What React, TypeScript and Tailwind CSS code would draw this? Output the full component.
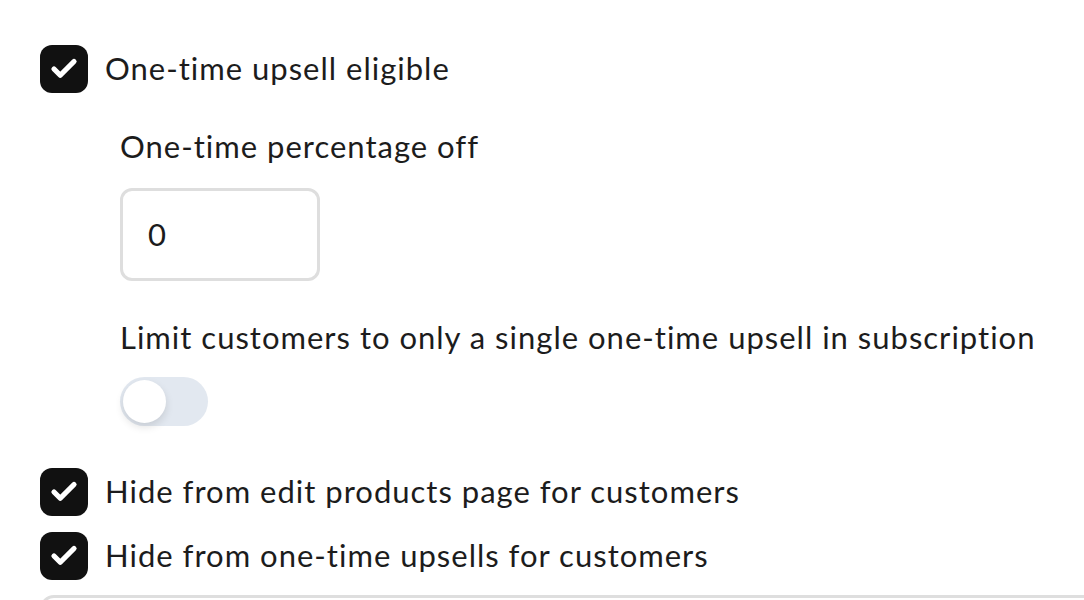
import { Check } from "lucide-react";

function Box({ label }: { label: string }) {
  return (
    <label className="flex items-center gap-[17px] h-12">
      <span className="w-12 h-12 rounded-[12px] bg-[#111111] flex items-center justify-center shrink-0">
        <Check className="w-[30px] h-[30px] text-white" strokeWidth={4.2} />
      </span>
      <span className="text-[31px] leading-10 tracking-[1px] text-[#1c1c1c] -mt-[3px]">{label}</span>
    </label>
  );
}

export default function App() {
  return (
    <div className="h-[600px] overflow-hidden bg-white pt-[45px] pl-10" style={{ fontFamily: "Lato, 'Noto Sans', sans-serif" }}>
      <Box label="One-time upsell eligible" />
      <div className="pl-20 pt-[33px]">
        <div className="text-[31px] leading-10 tracking-[1px] text-[#1c1c1c]">One-time percentage off</div>
        <div className="mt-[22px] w-[200px] h-[93px] rounded-[12px] border-[3px] border-[#dedede] flex items-center pl-[25px] text-[31px] text-[#1c1c1c]">
          0
        </div>
        <div className="mt-[36px] text-[31px] leading-10 tracking-[1px] text-[#1c1c1c]">Limit customers to only a single one-time upsell in subscription</div>
        <div className="mt-[20px] w-[88px] h-[49px] rounded-full bg-[#e2e8f0] p-[3px]">
          <div className="w-[43px] h-[43px] rounded-full bg-white shadow-[0_4px_8px_rgba(0,0,0,0.12)]" />
        </div>
      </div>
      <div className="mt-[42px] flex flex-col gap-4">
        <Box label="Hide from edit products page for customers" />
        <Box label="Hide from one-time upsells for customers" />
      </div>
      <div className="mt-[15px] h-24 rounded-[14px] border-[3px] border-[#dedede] mr-[-20px]" />
    </div>
  );
}
